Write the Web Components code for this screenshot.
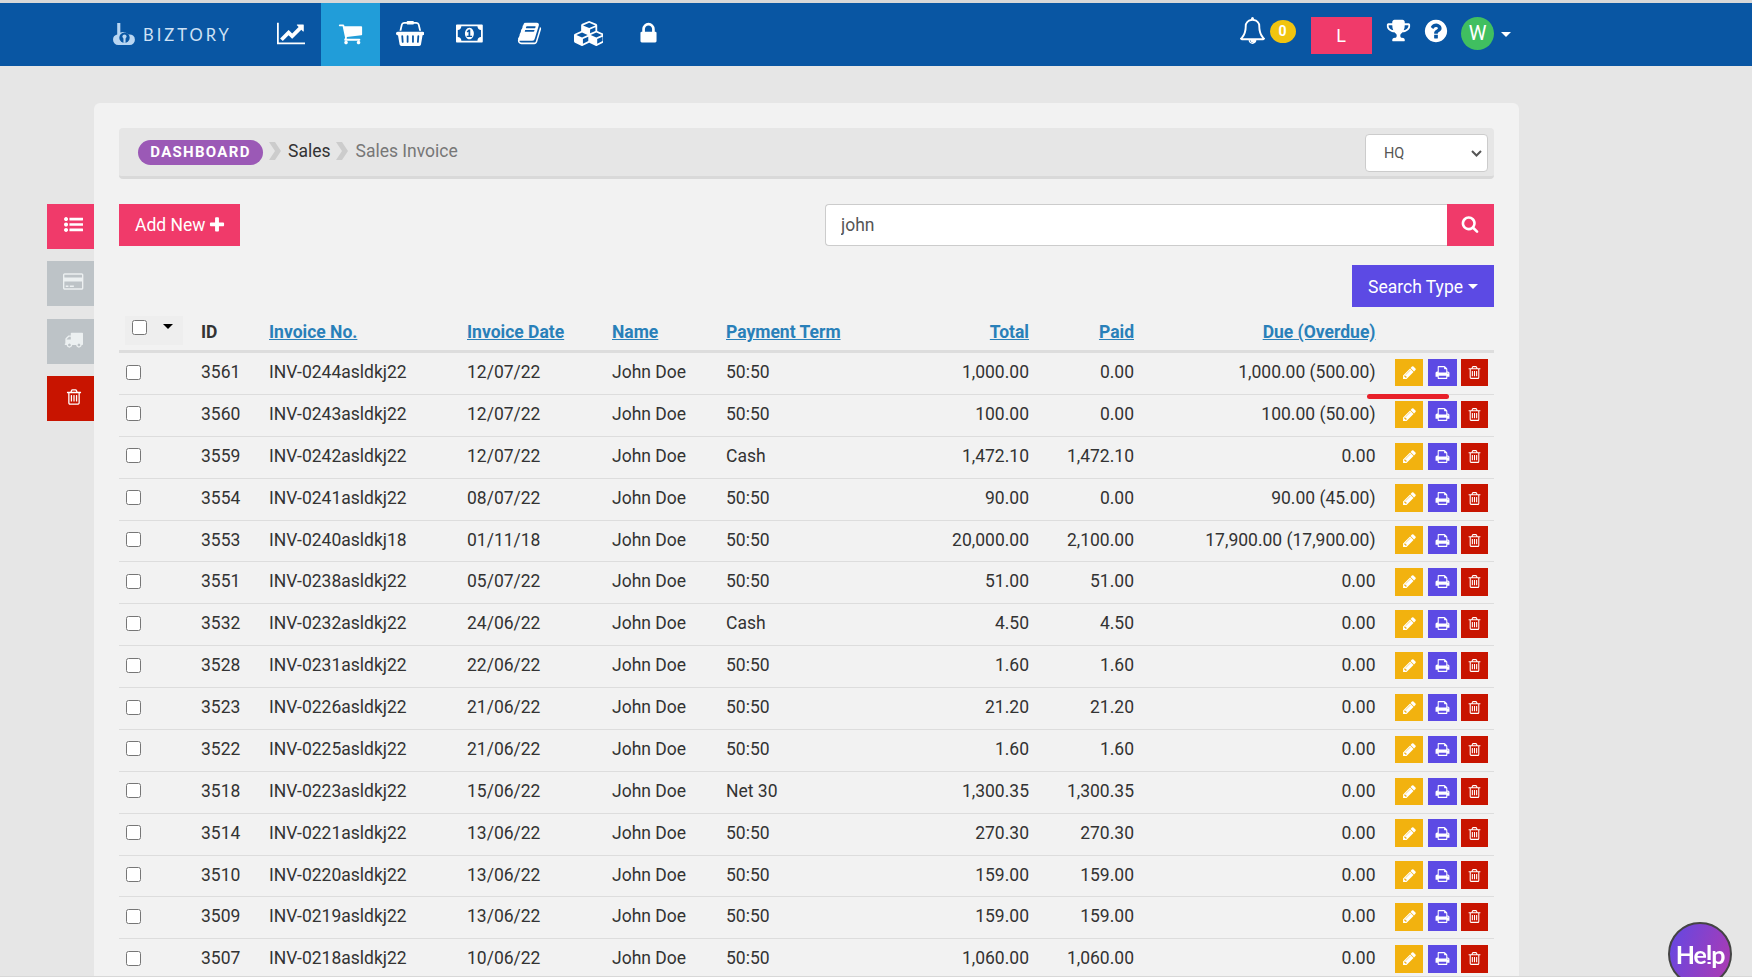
<!DOCTYPE html>
<html>
<head>
<meta charset="utf-8">
<title>Sales Invoice</title>
<style>
    html, body { margin: 0; height: 977px; overflow: hidden; background: #e6e6e6; font-family: Roboto, "Liberation Sans", sans-serif; color: #333; }
</style>
</head>
<body>
<app-shell></app-shell>
<script>
const ICONS = {
    chart: [2048, 'M2048 1536v128h-2048v-1536h128v1408h1920zm-128-1248v435q0 21-19.5 29.5t-35.5-7.5l-121-121-633 633q-10 10-23 10t-23-10l-233-233-416 416-192-192 585-585q10-10 23-10t23 10l233 233 464-464-121-121q-16-16-7.5-35.5t29.5-19.5h435q14 0 23 9t9 23z'],
    cart: [1792, 'M704 1536q0 52-38 90t-90 38-90-38-38-90 38-90 90-38 90 38 38 90zm896 0q0 52-38 90t-90 38-90-38-38-90 38-90 90-38 90 38 38 90zm128-1088v512q0 24-16.5 42.5t-40.5 21.5l-1044 122q13 60 13 70 0 16-24 64h920q26 0 45 19t19 45-19 45-45 19h-1024q-26 0-45-19t-19-45q0-11 8-31.5t16-36 21.5-40 15.5-29.5l-177-823h-204q-26 0-45-19t-19-45 19-45 45-19h256q16 0 28.5 6.5t19.5 15.5 13 24.5 8 26 5.5 29.5 4.5 26h1201q26 0 45 19t19 45z'],
    basket: [2048, 'M1920 768q53 0 90.5 37.5t37.5 90.5-37.5 90.5-90.5 37.5h-15l-115 662q-8 46-44 76t-82 30h-1280q-46 0-82-30t-44-76l-115-662h-15q-53 0-90.5-37.5t-37.5-90.5 37.5-90.5 90.5-37.5h1792zm-1435 800q26-2 43.5-22.5t15.5-46.5l-32-416q-2-26-22.5-43.5t-46.5-15.5-43.5 22.5-15.5 46.5l32 416q2 25 20.5 42t43.5 17h5zm411-64v-416q0-26-19-45t-45-19-45 19-19 45v416q0 26 19 45t45 19 45-19 19-45zm384 0v-416q0-26-19-45t-45-19-45 19-19 45v416q0 26 19 45t45 19 45-19 19-45zm352 5l32-416q2-26-15.5-46.5t-43.5-22.5-46.5 15.5-22.5 43.5l-32 416q-2 26 15.5 46.5t43.5 22.5h5q25 0 43.5-17t20.5-42zm-1156-1217l-93 412h-132l101-441q19-88 89-143.5t160-55.5h167q0-26 19-45t45-19h384q26 0 45 19t19 45h167q90 0 160 55.5t89 143.5l101 441h-132l-93-412q-11-44-45.5-72t-79.5-28h-167q0 26-19 45t-45 19h-384q-26 0-45-19t-19-45h-167q-45 0-79.5 28t-45.5 72z'],
    money: [1920, 'M768 1152h384v-96h-128v-448h-114l-148 137 77 80q42-37 55-57h2v288h-128v96zm512-256q0 70-21 142t-59.5 134-101.5 101-138 39-138-39-101.5-101-59.5-134-21-142 21-142 59.5-134 101.5-101 138-39 138 39 101.5 101 59.5 134 21 142zm512 256v-512q-106 0-181-75t-75-181h-1152q0 106-75 181t-181 75v512q106 0 181 75t75 181h1152q0-106 75-181t181-75zm128-832v1152q0 26-19 45t-45 19h-1792q-26 0-45-19t-19-45v-1152q0-26 19-45t45-19h1792q26 0 45 19t19 45z'],
    book: [1792, 'M1703 478q40 57 18 129l-275 906q-19 64-76.5 107.5t-122.5 43.5h-923q-77 0-148.5-53.5t-99.5-131.5q-24-67-2-127 0-4 3-27t4-37q1-8-3-21.5t-3-19.5q2-11 8-21t16.5-23.5 16.5-23.5q23-38 45-91.5t30-91.5q3-10 .5-30t-.5-28q3-11 17-28t17-23q21-36 42-92t25-90q1-9-2.5-32t.5-28q4-13 22-30.5t22-22.5q19-26 42.5-84.5t27.5-96.5q1-8-3-25.5t-2-26.5q2-8 9-18t18-23 17-21q8-12 16.5-30.5t15-35 16-36 19.5-32 26.5-23.5 36-11.5 47.5 5.5l-1 3q38-9 51-9h761q74 0 114 56t18 130l-274 906q-36 119-71.5 153.5t-128.5 34.5h-869q-27 0-38 15-11 16-1 43 24 70 144 70h923q29 0 56-15.5t35-41.5l300-987q7-22 5-57 38 15 59 43zm-1064 2q-4 13 2 22.5t20 9.5h608q13 0 25.5-9.5t16.5-22.5l21-64q4-13-2-22.5t-20-9.5h-608q-13 0-25.5 9.5t-16.5 22.5zm-83 256q-4 13 2 22.5t20 9.5h608q13 0 25.5-9.5t16.5-22.5l21-64q4-13-2-22.5t-20-9.5h-608q-13 0-25.5 9.5t-16.5 22.5z'],
    cubes: [2048, 'M640 1632l384-192v-314l-384 164v342zm-64-454l404-173-404-173-404 173zm1088 454l384-192v-314l-384 164v342zm-64-454l404-173-404-173-404 173zm-448-293l384-165v-266l-384 164v267zm-64-379l441-189-441-189-441 189zm1088 518v416q0 36-19 67t-52 47l-448 224q-25 14-57 14t-57-14l-448-224q-4-2-7-4-2 2-7 4l-448 224q-25 14-57 14t-57-14l-448-224q-33-16-52-47t-19-67v-416q0-38 21.5-70t56.5-48l434-186v-400q0-38 21.5-70t56.5-48l448-192q23-10 50-10t50 10l448 192q35 16 56.5 48t21.5 70v400l434 186q36 16 57 48t21 70z'],
    lock: [1792, 'M640 768h512v-192q0-106-75-181t-181-75-181 75-75 181v192zm832 96v576q0 40-28 68t-68 28h-960q-40 0-68-28t-28-68v-576q0-40 28-68t68-28h32v-192q0-184 132-316t316-132 316 132 132 316v192h32q40 0 68 28t28 68z'],
    bell: [1792, 'M912 1696q0-16-16-16-59 0-101.5-42.5t-42.5-101.5q0-16-16-16t-16 16q0 73 51.5 124.5t124.5 51.5q16 0 16-16zm-666-288h1300q-266-300-266-832 0-51-24-105t-69-103-121.5-80.5-169.5-31.5-169.5 31.5-121.5 80.5-69 103-24 105q0 532-266 832zm1482 0q0 52-38 90t-90 38h-448q0 106-75 181t-181 75-181-75-75-181h-448q-52 0-90-38t-38-90q50-42 91-88t85-119.5 74.5-158.5 50-206 19.5-260q0-152 117-282.5t307-158.5q-8-19-8-39 0-40 28-68t68-28 68 28 28 68q0 20-8 39 190 28 307 158.5t117 282.5q0 139 19.5 260t50 206 74.5 158.5 85 119.5 91 88z'],
    trophy: [1792, 'M522 883q-74-162-74-371h-256v96q0 78 94.5 162t235.5 113zm1078-275v-96h-256q0 209-74 371 141-29 235.5-113t94.5-162zm128-128v128q0 71-41.5 143t-112 130-173 97.5-215.5 44.5q-42 54-95 95-38 34-52.5 72.5t-14.5 89.5q0 54 30.5 91t97.5 37q75 0 133.5 45.5t58.5 114.5v64q0 14-9 23t-23 9h-832q-14 0-23-9t-9-23v-64q0-69 58.5-114.5t133.5-45.5q67 0 97.5-37t30.5-91q0-51-14.5-89.5t-52.5-72.5q-53-41-95-95-113-5-215.5-44.5t-173-97.5-112-130-41.5-143v-128q0-40 28-68t68-28h288v-96q0-66 47-113t113-47h576q66 0 113 47t47 113v96h288q40 0 68 28t28 68z'],
    question: [1792, 'M1024 1376v-192q0-14-9-23t-23-9h-192q-14 0-23 9t-9 23v192q0 14 9 23t23 9h192q14 0 23-9t9-23zm256-672q0-88-55.5-163t-138.5-116-170-41q-243 0-371 213-15 24 8 42l132 100q7 6 19 6 16 0 25-12 53-68 86-92 34-24 86-24 48 0 85.5 26t37.5 59q0 38-20 61t-68 45q-63 28-115.5 86.5t-52.5 125.5v36q0 14 9 23t23 9h192q14 0 23-9t9-23q0-19 21.5-49.5t54.5-49.5q32-18 49-28.5t46-35 44.5-48 28-60.5 12.5-81zm384 192q0 209-103 385.5t-279.5 279.5-385.5 103-385.5-103-279.5-279.5-103-385.5 103-385.5 279.5-279.5 385.5-103 385.5 103 279.5 279.5 103 385.5z'],
    list: [1792, 'M384 1408q0 80-56 136t-136 56-136-56-56-136 56-136 136-56 136 56 56 136zm0-512q0 80-56 136t-136 56-136-56-56-136 56-136 136-56 136 56 56 136zm1408 416v192q0 13-9.5 22.5t-22.5 9.5h-1216q-13 0-22.5-9.5t-9.5-22.5v-192q0-13 9.5-22.5t22.5-9.5h1216q13 0 22.5 9.5t9.5 22.5zm-1408-928q0 80-56 136t-136 56-136-56-56-136 56-136 136-56 136 56 56 136zm1408 416v192q0 13-9.5 22.5t-22.5 9.5h-1216q-13 0-22.5-9.5t-9.5-22.5v-192q0-13 9.5-22.5t22.5-9.5h1216q13 0 22.5 9.5t9.5 22.5zm0-512v192q0 13-9.5 22.5t-22.5 9.5h-1216q-13 0-22.5-9.5t-9.5-22.5v-192q0-13 9.5-22.5t22.5-9.5h1216q13 0 22.5 9.5t9.5 22.5z'],
    card: [1920, 'M1760 128q66 0 113 47t47 113v1216q0 66-47 113t-113 47h-1600q-66 0-113-47t-47-113v-1216q0-66 47-113t113-47h1600zm-1600 128q-13 0-22.5 9.5t-9.5 22.5v224h1664v-224q0-13-9.5-22.5t-22.5-9.5h-1600zm1600 1280q13 0 22.5-9.5t9.5-22.5v-608h-1664v608q0 13 9.5 22.5t22.5 9.5h1600zm-1504-128v-128h256v128h-256zm384 0v-128h384v128h-384z'],
    truck: [1792, 'M640 1408q0-52-38-90t-90-38-90 38-38 90 38 90 90 38 90-38 38-90zm-384-512h384v-256h-158q-13 0-22 9l-195 195q-9 9-9 22v30zm1280 512q0-52-38-90t-90-38-90 38-38 90 38 90 90 38 90-38 38-90zm256-1088v1024q0 15-4 26.5t-13.5 18.5-16.5 11.5-23.5 6-22.5 2-25.5 0-22.5-.5q0 106-75 181t-181 75-181-75-75-181h-384q0 106-75 181t-181 75-181-75-75-181h-64q-3 0-22.5.5t-25.5 0-22.5-2-23.5-6-16.5-11.5-13.5-18.5-4-26.5q0-26 19-45t45-19v-320q0-8-.5-35t0-38 2.5-34.5 6.5-37 14-30.5 22.5-30l198-198q19-19 50.5-32t58.5-13h160v-192q0-26 19-45t45-19h1024q26 0 45 19t19 45z'],
    trash: [1792, 'M704 736v576q0 14-9 23t-23 9h-64q-14 0-23-9t-9-23v-576q0-14 9-23t23-9h64q14 0 23 9t9 23zm256 0v576q0 14-9 23t-23 9h-64q-14 0-23-9t-9-23v-576q0-14 9-23t23-9h64q14 0 23 9t9 23zm256 0v576q0 14-9 23t-23 9h-64q-14 0-23-9t-9-23v-576q0-14 9-23t23-9h64q14 0 23 9t9 23zm128 724v-948h-896v948q0 22 7 40.5t14.5 27 10.5 8.5h832q3 0 10.5-8.5t14.5-27 7-40.5zm-672-1076h448l-48-117q-7-9-17-11h-317q-10 2-17 11zm928 32v64q0 14-9 23t-23 9h-96v948q0 83-47 143.5t-113 60.5h-832q-66 0-113-58.5t-47-141.5v-952h-96q-14 0-23-9t-9-23v-64q0-14 9-23t23-9h309l70-167q15-37 54-63t79-26h320q40 0 79 26t54 63l70 167h309q14 0 23 9t9 23z'],
    pencil: [1792, 'M491 1536l91-91-235-235-91 91v107h128v128h107zm523-928q0-22-22-22-10 0-17 7l-542 542q-7 7-7 17 0 22 22 22 10 0 17-7l542-542q7-7 7-17zm-54-192l416 416-832 832h-416v-416zm683 96q0 53-37 90l-166 166-416-416 166-165q36-38 90-38 53 0 91 38l235 234q37 39 37 91z'],
    print: [1792, 'M448 1536h896v-256h-896v256zm0-640h896v-384h-160q-40 0-68-28t-28-68v-160h-640v640zm1152 64q0-26-19-45t-45-19-45 19-19 45 19 45 45 19 45-19 19-45zm128 0v416q0 13-9.5 22.5t-22.5 9.5h-224v160q0 40-28 68t-68 28h-960q-40 0-68-28t-28-68v-160h-224q-13 0-22.5-9.5t-9.5-22.5v-416q0-79 56.5-135.5t135.5-56.5h64v-544q0-40 28-68t68-28h672q40 0 88 20t76 48l152 152q28 28 48 76t20 88v256h64q79 0 135.5 56.5t56.5 135.5z'],
    search: [1792, 'M1216 832q0-185-131.5-316.5t-316.5-131.5-316.5 131.5-131.5 316.5 131.5 316.5 316.5 131.5 316.5-131.5 131.5-316.5zm512 832q0 52-38 90t-90 38q-54 0-90-38l-343-342q-179 124-399 124-143 0-273.5-55.5t-225-150-150-225-55.5-273.5 55.5-273.5 150-225 225-150 273.5-55.5 273.5 55.5 225 150 150 225 55.5 273.5q0 220-124 399l343 343q37 37 37 90z'],
    plus: [1792, 'M1600 736v192q0 40-28 68t-68 28h-416v416q0 40-28 68t-68 28h-192q-40 0-68-28t-28-68v-416h-416q-40 0-68-28t-28-68v-192q0-40 28-68t68-28h416v-416q0-40 28-68t68-28h192q40 0 68 28t28 68v416h416q40 0 68 28t28 68z']
};

class FaIcon extends HTMLElement {
    connectedCallback() {
        const [w, d] = ICONS[this.getAttribute('name')];
        const size = Number(this.getAttribute('size') || 16);
        const root = this.attachShadow({ mode: 'open' });
        root.innerHTML = `
            <style>
                :host { display: inline-flex; line-height: 0; color: inherit; }
                svg { display: block; fill: currentColor; }
            </style>
            <svg width="${size * w / 1792}" height="${size}" viewBox="0 0 ${w} 1792"><path d="${d}"/></svg>`;
    }
}
customElements.define('fa-icon', FaIcon);

class TopBar extends HTMLElement {
    connectedCallback() {
        const nav = ['chart', 'cart', 'basket', 'money', 'book', 'cubes', 'lock'];
        const root = this.attachShadow({ mode: 'open' });
        root.innerHTML = `
            <style>
                :host { display: flex; align-items: stretch; height: 63px; background: #0956a3; color: #fff; font-family: Roboto, sans-serif; }
                .logo { display: flex; align-items: center; width: 149px; padding-left: 112px; gap: 6px; color: #cfe2f5; font: 400 16.5px Lato, sans-serif; letter-spacing: 3px; }
                .logo svg { display: block; }
                .nav { display: flex; }
                .nav a { width: 59.6px; padding-bottom: 2px; box-sizing: border-box; display: flex; align-items: center; justify-content: center; }
                .nav a.on { background: #219dd9; }
                .right { margin-left: auto; display: flex; align-items: flex-start; padding-right: 241px; }
                .bell { margin: 14px 0 0 0; }
                .badge { margin: 17px 0 0 4px; width: 26px; height: 23px; border-radius: 50%; background: #f1c40f; font: 700 14px/23px Roboto, sans-serif; text-align: center; }
                .lang { margin: 14px 0 0 15px; width: 61px; height: 37px; background: #f03a6a; font: 400 18px/37px Roboto, sans-serif; text-align: center; }
                .cup { margin: 15px 0 0 14px; }
                .q { margin: 15px 0 0 12.5px; }
                .avatar { margin: 14px 0 0 12px; width: 33px; height: 33px; border-radius: 50%; background: #40bf60; font: 400 20px/33px Roboto, sans-serif; text-align: center; }
                .caret { margin: 29px 0 0 7px; border: 5px solid transparent; border-top-color: #fff; border-bottom: 0; }
            </style>
            <div class="logo">
                <svg width="25" height="25" viewBox="0 0 24 24"><path fill="#b9d6f2" d="M5 1h3v9a8 8 0 0 1 8 2 5 5 0 0 1 6 5 5 5 0 0 1-5 5H6a5 5 0 0 1-5-5 5 5 0 0 1 4-5z"/><circle cx="12" cy="15" r="5" fill="#0956a3"/><circle cx="12" cy="14" r="2" fill="#b9d6f2"/><rect x="11" y="15" width="2" height="5" fill="#b9d6f2"/></svg>
                <span>BIZTORY</span>
            </div>
            <div class="nav">
                ${nav.map(n => `<a class="${n === 'cart' ? 'on' : ''}"><fa-icon name="${n}" size="25"></fa-icon></a>`).join('')}
            </div>
            <div class="right">
                <fa-icon class="bell" name="bell" size="27"></fa-icon>
                <span class="badge">0</span>
                <span class="lang">L</span>
                <fa-icon class="cup" name="trophy" size="25"></fa-icon>
                <fa-icon class="q" name="question" size="26"></fa-icon>
                <span class="avatar">W</span>
                <span class="caret"></span>
            </div>`;
    }
}
customElements.define('top-bar', TopBar);

class SideRail extends HTMLElement {
    connectedCallback() {
        const root = this.attachShadow({ mode: 'open' });
        root.innerHTML = `
            <style>
                :host { display: flex; flex-direction: column; width: 47px; margin-left: 47px; padding-top: 138px; }
                a { height: 45px; margin-top: 12px; box-sizing: border-box; padding: 0 0 4px 6px; display: flex; align-items: center; justify-content: center; color: #fff; }
                a:first-of-type { margin-top: 0; }
                a:nth-of-type(3) { margin-top: 13px; }
                .pink { background: #f03a6a; }
                .grey { background: #bdc3c7; color: #ecf0f1; }
                .red { background: #c81400; }
            </style>
            <a class="pink"><fa-icon name="list" size="19"></fa-icon></a>
            <a class="grey"><fa-icon name="card" size="19"></fa-icon></a>
            <a class="grey"><fa-icon name="truck" size="19"></fa-icon></a>
            <a class="red"><fa-icon name="trash" size="18"></fa-icon></a>`;
    }
}
customElements.define('side-rail', SideRail);

class BreadCrumb extends HTMLElement {
    connectedCallback() {
        const chev = '<svg class="chev" width="12" height="18" viewBox="0 0 12 18"><path d="M0 0h6l6 9-6 9H0l6-9z" fill="#cccccc"/></svg>';
        const root = this.attachShadow({ mode: 'open' });
        root.innerHTML = `
            <style>
                :host { display: flex; align-items: center; height: 48px; padding: 0 6px 0 19px; background: #e6e6e6; border-bottom: 3px solid #d9d9d9; border-radius: 4px; font-size: 17.5px; }
                .pill { display: inline-block; width: 125px; height: 25px; border-radius: 13px; background: #9b59b6; color: #fff; font: 700 15px/25px Roboto, sans-serif; letter-spacing: 1.3px; text-align: center; }
                .chev { margin: 0 7px 2px 6px; }
                .t { margin-bottom: 2px; }
                .here { color: #777; }
                .pick { position: relative; margin: 2px 0 0 auto; }
                select { display: block; appearance: none; width: 123px; height: 38px; padding: 0 0 0 18px; background: #fff; border: 1px solid #ccc; border-radius: 4px; color: #555; font: 400 14.5px Roboto, sans-serif; }
                .arrow { position: absolute; right: 6px; top: 16px; }
            </style>
            <span class="pill">DASHBOARD</span>${chev}<span class="t">Sales</span>${chev}<span class="t here">Sales Invoice</span>
            <span class="pick">
                <select><option>HQ</option></select>
                <svg class="arrow" width="11" height="7" viewBox="0 0 11 7"><path d="M1 1l4.5 4.5L10 1" fill="none" stroke="#555" stroke-width="2"/></svg>
            </span>`;
    }
}
customElements.define('bread-crumb', BreadCrumb);

class SearchTools extends HTMLElement {
    connectedCallback() {
        const root = this.attachShadow({ mode: 'open' });
        root.innerHTML = `
            <style>
                :host { display: block; font-size: 17.5px; }
                .row { display: flex; height: 42px; }
                .row + .row { margin-top: 19px; }
                .add { display: flex; align-items: center; gap: 3px; width: 121px; box-sizing: border-box; padding: 0 0 1px 16px; background: #f03a6a; color: #fff; }
                input { margin-left: auto; width: 622px; box-sizing: border-box; padding: 0 15px 1px; border: 1px solid #ccc; border-right: 0; border-radius: 4px 0 0 4px; background: #fff; color: #555; font: 400 17.5px Roboto, sans-serif; outline: 0; }
                .go { width: 47px; box-sizing: border-box; padding: 0 2px 2px 0; display: flex; align-items: center; justify-content: center; background: #f03a6a; color: #fff; }
                .type { margin-left: auto; width: 142px; box-sizing: border-box; padding-top: 1px; display: flex; align-items: center; justify-content: center; gap: 5px; background: #5c4ae4; color: #fff; }
                .type i { border: 5px solid transparent; border-top-color: #fff; border-bottom: 0; }
            </style>
            <div class="row">
                <a class="add">Add New<fa-icon name="plus" size="18"></fa-icon></a>
                <input value="john">
                <a class="go"><fa-icon name="search" size="18"></fa-icon></a>
            </div>
            <div class="row"><a class="type">Search Type<i></i></a></div>`;
    }
}
customElements.define('search-tools', SearchTools);

class RowActions extends HTMLElement {
    connectedCallback() {
        const root = this.attachShadow({ mode: 'open' });
        root.innerHTML = `
            <style>
                :host { display: flex; padding: 1px 0 0 19.5px; color: #fff; }
                a { height: 27.5px; display: flex; align-items: center; justify-content: center; }
                .e { width: 28px; background: #f2b20f; }
                .p { width: 29px; margin: 0 4px 0 5px; background: #5c4ae4; }
                .d { width: 27px; background: #c81400; }
            </style>
            <a class="e"><fa-icon name="pencil" size="15"></fa-icon></a>
            <a class="p"><fa-icon name="print" size="15"></fa-icon></a>
            <a class="d"><fa-icon name="trash" size="15"></fa-icon></a>`;
    }
}
customElements.define('row-actions', RowActions);

const invoices = [
    ['3561', 'INV-0244asldkj22', '12/07/22', '50:50', '1,000.00', '0.00', '1,000.00 (500.00)'],
    ['3560', 'INV-0243asldkj22', '12/07/22', '50:50', '100.00', '0.00', '100.00 (50.00)'],
    ['3559', 'INV-0242asldkj22', '12/07/22', 'Cash', '1,472.10', '1,472.10', '0.00'],
    ['3554', 'INV-0241asldkj22', '08/07/22', '50:50', '90.00', '0.00', '90.00 (45.00)'],
    ['3553', 'INV-0240asldkj18', '01/11/18', '50:50', '20,000.00', '2,100.00', '17,900.00 (17,900.00)'],
    ['3551', 'INV-0238asldkj22', '05/07/22', '50:50', '51.00', '51.00', '0.00'],
    ['3532', 'INV-0232asldkj22', '24/06/22', 'Cash', '4.50', '4.50', '0.00'],
    ['3528', 'INV-0231asldkj22', '22/06/22', '50:50', '1.60', '1.60', '0.00'],
    ['3523', 'INV-0226asldkj22', '21/06/22', '50:50', '21.20', '21.20', '0.00'],
    ['3522', 'INV-0225asldkj22', '21/06/22', '50:50', '1.60', '1.60', '0.00'],
    ['3518', 'INV-0223asldkj22', '15/06/22', 'Net 30', '1,300.35', '1,300.35', '0.00'],
    ['3514', 'INV-0221asldkj22', '13/06/22', '50:50', '270.30', '270.30', '0.00'],
    ['3510', 'INV-0220asldkj22', '13/06/22', '50:50', '159.00', '159.00', '0.00'],
    ['3509', 'INV-0219asldkj22', '13/06/22', '50:50', '159.00', '159.00', '0.00'],
    ['3507', 'INV-0218asldkj22', '10/06/22', '50:50', '1,060.00', '1,060.00', '0.00']
];

class InvoiceTable extends HTMLElement {
    connectedCallback() {
        const root = this.attachShadow({ mode: 'open' });
        root.innerHTML = `
            <style>
                :host { display: block; position: relative; margin-top: 9px; font-size: 17.5px; color: #333; }
                .line { display: grid; grid-template-columns: 82px 68px 198px 145px 114px 150px 153px 105px 241.5px 1fr; align-items: center; box-sizing: border-box; height: 41.89px; padding-bottom: 2.8px; border-bottom: 1px solid #ddd; }
                .head { height: 37px; padding-bottom: 5px; border-bottom: 3px solid #ddd; font-weight: 700; }
                .num { text-align: right; }
                .head a { color: #2980b9; text-decoration: underline; }
                input { display: block; width: 15px; height: 15px; margin: 0 0 0 7px; }
                .all { display: flex; align-items: flex-start; height: 29px; width: 58px; margin: 0 0 3px 6px; background: #eeeeee; }
                .all input { margin: 4px 0 0 7px; }
                .all i { margin: 8px 0 0 16px; border: 5px solid transparent; border-top-color: #000; border-bottom: 0; }
                .mark { position: absolute; left: 1248px; top: 78px; width: 82px; height: 5px; border-radius: 3px; background: #e8202a; }
            </style>
            <div class="line head">
                <div class="all"><input type="checkbox"><i></i></div>
                <div>ID</div><div><a>Invoice No.</a></div><div><a>Invoice Date</a></div><div><a>Name</a></div><div><a>Payment Term</a></div>
                <div class="num"><a>Total</a></div><div class="num"><a>Paid</a></div><div class="num"><a>Due (Overdue)</a></div><div></div>
            </div>
            ${invoices.map(r => `
            <div class="line">
                <div><input type="checkbox"></div>
                <div>${r[0]}</div><div>${r[1]}</div><div>${r[2]}</div><div>John Doe</div><div>${r[3]}</div>
                <div class="num">${r[4]}</div><div class="num">${r[5]}</div><div class="num">${r[6]}</div>
                <row-actions></row-actions>
            </div>`).join('')}
            <div class="mark"></div>`;
    }
}
customElements.define('invoice-table', InvoiceTable);

class HelpBubble extends HTMLElement {
    connectedCallback() {
        const root = this.attachShadow({ mode: 'open' });
        root.innerHTML = `
            <style>
                :host { position: fixed; left: 1668px; top: 922px; width: 64px; height: 64px; border-radius: 50%; box-sizing: border-box; border: 2px solid #444; background: linear-gradient(110deg, #6248e4, #b03ab0); display: flex; align-items: center; justify-content: center; color: #fff; font: 700 25px Lato, sans-serif; letter-spacing: -1px; }
                b { position: relative; font-weight: 700; }
                b::after { content: ''; position: absolute; left: 0; right: 0; bottom: 7px; height: 2px; background: #8a40c8; }
            </style>
            He<b>l</b>p`;
    }
}
customElements.define('help-bubble', HelpBubble);

class AppShell extends HTMLElement {
    connectedCallback() {
        const root = this.attachShadow({ mode: 'open' });
        root.innerHTML = `
            <style>
                :host { display: block; box-sizing: border-box; height: 977px; overflow: hidden; border-top: 3px solid #d8d8d8; border-bottom: 1px solid #d8d8d8; }
                .body { display: flex; align-items: flex-start; }
                .card { width: 1425px; box-sizing: border-box; height: 900px; margin-top: 37px; padding: 25px 25px 0; background: #f2f2f2; border-radius: 6px 6px 0 0; }
                search-tools { margin-top: 25px; }
            </style>
            <top-bar></top-bar>
            <div class="body">
                <side-rail></side-rail>
                <div class="card">
                    <bread-crumb></bread-crumb>
                    <search-tools></search-tools>
                    <invoice-table></invoice-table>
                </div>
            </div>
            <help-bubble></help-bubble>`;
    }
}
customElements.define('app-shell', AppShell);
</script>
</body>
</html>
